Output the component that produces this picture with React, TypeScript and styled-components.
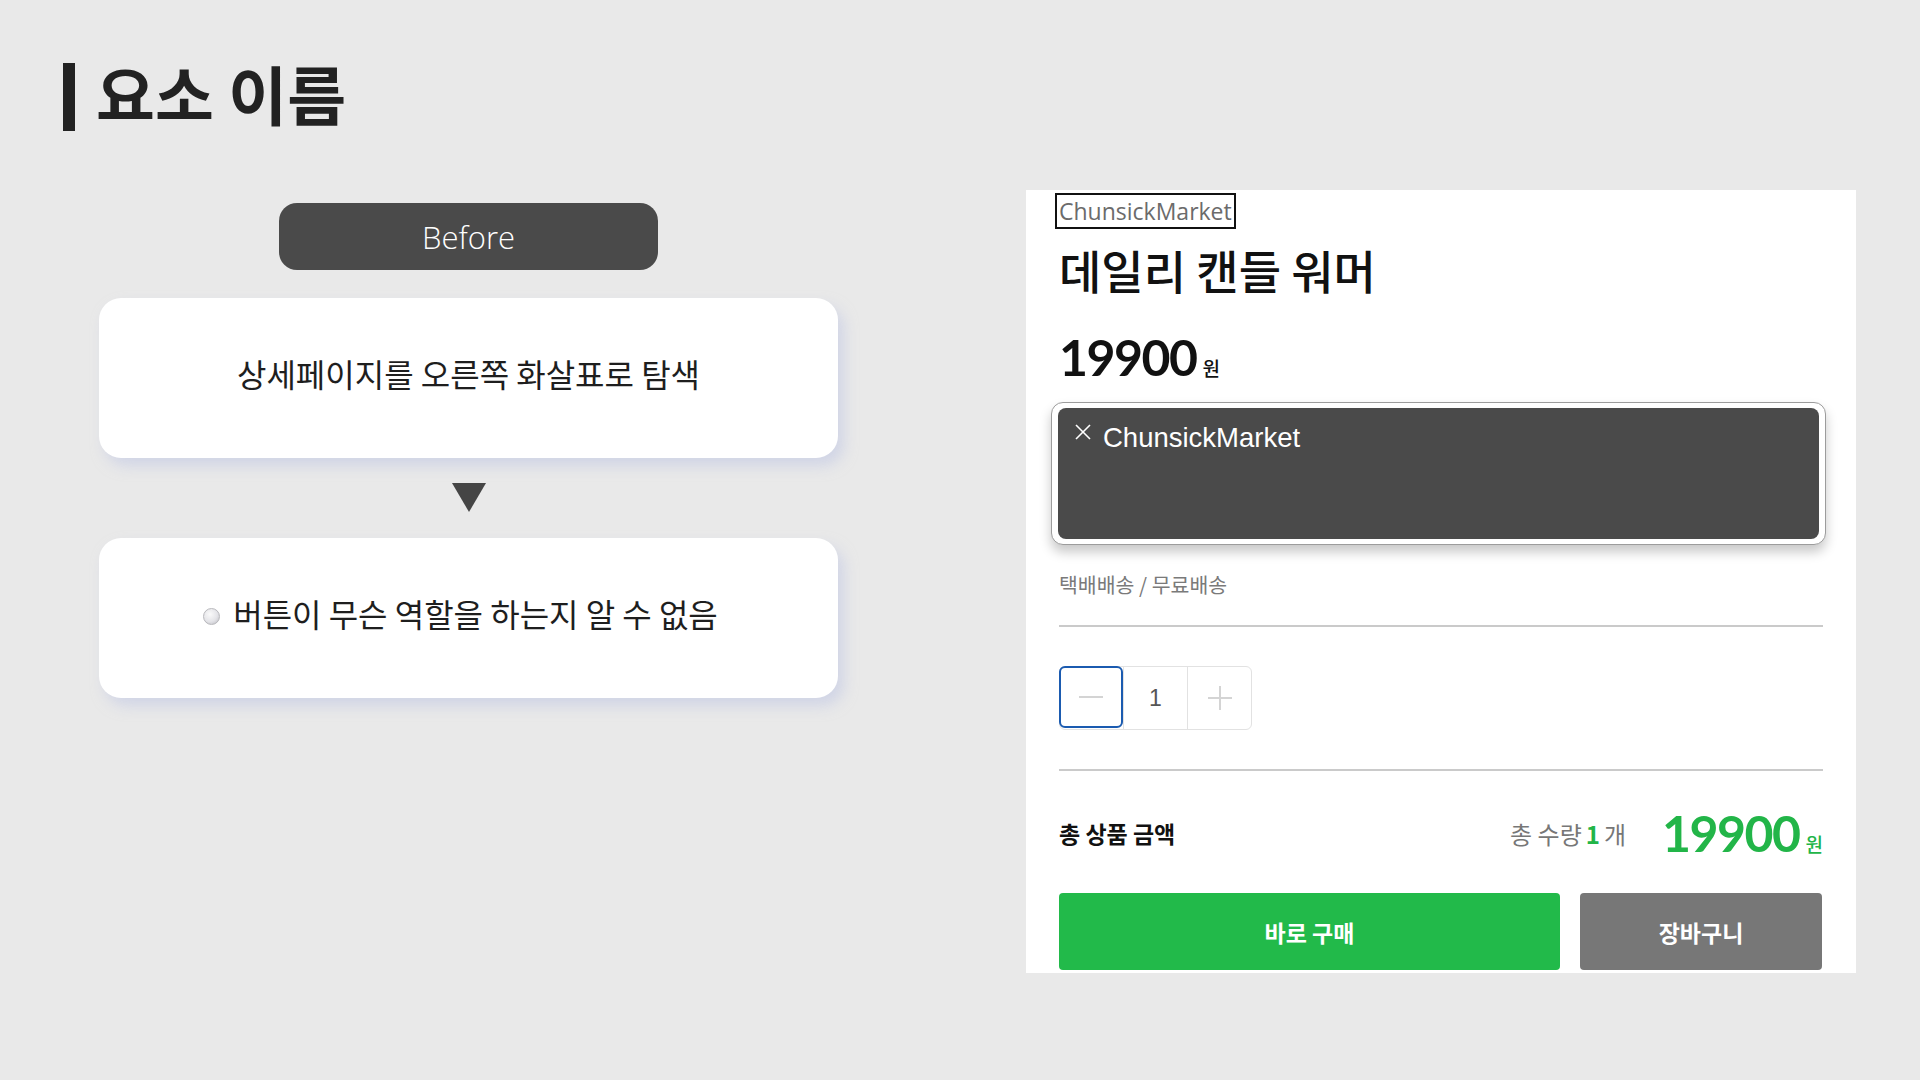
import React from 'react';
import styled, { createGlobalStyle } from 'styled-components';

const GlobalStyle = createGlobalStyle`
  html, body {
    margin: 0;
    padding: 0;
    background: #e9e9e9;
  }
  * {
    box-sizing: border-box;
  }
`;

const KR = `"Noto Sans CJK KR", "Noto Sans", sans-serif`;

const Page = styled.div`
  width: 1920px;
  height: 1080px;
  background: #e9e9e9;
  padding: 63px 64px 0 63px;
  font-family: ${KR};
  overflow: hidden;
`;

const Header = styled.div`
  display: flex;
  align-items: center;
  gap: 21px;
  height: 68px;
`;

const HeaderBar = styled.div`
  width: 12px;
  height: 68px;
  background: #222;
`;

const HeaderTitle = styled.h1`
  margin: -10px 0 0;
  font-size: 64px;
  font-weight: 700;
  line-height: 68px;
  color: #222;
`;

const Body = styled.div`
  display: flex;
  gap: 188px;
  margin-top: 59px;
  padding-left: 36px;
`;

const LeftColumn = styled.div`
  width: 739px;
  padding-top: 13px;
  display: flex;
  flex-direction: column;
  align-items: center;
`;

const StagePill = styled.div`
  width: 379px;
  height: 67px;
  border-radius: 18px;
  background: #4a4a4a;
  color: #fff;
  display: flex;
  align-items: center;
  justify-content: center;
  font-family: "Open Sans", sans-serif;
  font-weight: 300;
  font-size: 31px;
  margin-bottom: 28px;
`;

const Card = styled.div<{ $nudge?: number }>`
  width: 739px;
  height: 160px;
  border-radius: 22px;
  background: #fff;
  box-shadow: 6px 8px 14px rgba(190, 196, 228, 0.55);
  display: flex;
  align-items: center;
  justify-content: center;
  gap: 13px;
  padding-bottom: 10px;
  padding-right: ${p => p.$nudge ?? 0}px;
  font-size: 32px;
  color: #1e1e1e;
`;

const Bullet = styled.span`
  width: 17px;
  height: 17px;
  border-radius: 50%;
  border: 1px solid #b8b8bc;
  background: radial-gradient(circle at 40% 35%, #fafafa 0%, #e4e4e8 55%, #b9b9bf 100%);
  margin-top: 6px;
`;

const DownArrow = styled.div`
  width: 0;
  height: 0;
  border-left: 17px solid transparent;
  border-right: 17px solid transparent;
  border-top: 29px solid #454545;
  margin: 25px 0 26px;
`;

const ProductPanel = styled.div`
  width: 830px;
  height: 783px;
  background: #fff;
  padding: 3px 33px 0 33px;
  display: flex;
  flex-direction: column;
  overflow: hidden;
`;

const BrandTag = styled.div`
  align-self: flex-start;
  margin-left: -4px;
  border: 2px solid #111;
  padding: 0 2px;
  font-family: "Open Sans", sans-serif;
  font-size: 23px;
  line-height: 32px;
  color: #6b6b6b;
`;

const ProductName = styled.h2`
  margin: 12px 0 0;
  font-size: 46px;
  font-weight: 500;
  line-height: 56px;
  color: #111;
`;

const PriceLine = styled.div<{ $top: number; $color: string }>`
  display: flex;
  align-items: baseline;
  margin-top: ${p => p.$top}px;
  color: ${p => p.$color};
`;

const PriceNumber = styled.span`
  font-family: Lato, "Noto Sans", sans-serif;
  font-weight: 700;
  font-size: 50px;
  line-height: 60px;
  letter-spacing: -1.5px;
`;

const Won = styled.span`
  font-size: 19px;
  font-weight: 500;
  margin-left: 6px;
`;

const TooltipFrame = styled.div`
  margin: 15px -3px 0 -8px;
  height: 143px;
  background: #fff;
  border: 1px solid #9c9c9c;
  border-radius: 12px;
  padding: 5px 6px;
  box-shadow: 0 7px 12px rgba(0, 0, 0, 0.22);
`;

const TooltipBody = styled.div`
  height: 100%;
  background: #4a4a4a;
  border-radius: 8px;
  padding: 14px 16px;
  display: flex;
  align-items: flex-start;
  gap: 11px;
`;

const CloseMark = styled.svg`
  margin-top: 2px;
  flex: none;
`;

const TooltipText = styled.span`
  font-family: "Liberation Sans", Arial, sans-serif;
  font-size: 27.5px;
  line-height: 32px;
  color: #fff;
`;

const Shipping = styled.div`
  margin-top: 26px;
  font-size: 20.5px;
  line-height: 26px;
  color: #7a7a7a;
`;

const Divider = styled.div<{ $top: number }>`
  margin-top: ${p => p.$top}px;
  height: 2px;
  background: #cacaca;
`;

const Stepper = styled.div`
  margin-top: 39px;
  width: 193px;
  height: 64px;
  display: flex;
  border: 1px solid #e2e2e2;
  border-radius: 6px;
`;

const StepCell = styled.div<{ $active?: boolean }>`
  width: 64px;
  height: 100%;
  display: flex;
  align-items: center;
  justify-content: center;
  font-family: "Liberation Sans", Arial, sans-serif;
  font-size: 23px;
  color: #555;
  border: ${p => (p.$active ? '2.5px solid #1b5bb0' : 'none')};
  border-radius: ${p => (p.$active ? '6px' : '0')};
  margin: ${p => (p.$active ? '-1px 0 -1px -1px' : '0')};
  & + & {
    border-left: 1px solid #e2e2e2;
  }
`;

const TotalRow = styled.div`
  margin-top: 32px;
  height: 60px;
  display: flex;
  align-items: center;
  justify-content: space-between;
`;

const TotalLabel = styled.span`
  font-size: 23px;
  font-weight: 700;
  color: #111;
`;

const TotalRight = styled.div`
  display: flex;
  align-items: center;
  gap: 36px;
`;

const Quantity = styled.span`
  font-size: 24px;
  color: #777;
  b {
    color: #22b548;
    font-weight: 700;
    margin: 0 4px;
  }
`;

const ButtonRow = styled.div`
  margin-top: 30px;
  display: flex;
  gap: 20px;
`;

const ActionButton = styled.button<{ $primary?: boolean }>`
  height: 77px;
  width: ${p => (p.$primary ? '501px' : '242px')};
  border: none;
  border-radius: 4px;
  background: ${p => (p.$primary ? '#22ba4a' : '#777777')};
  color: #fff;
  font-family: ${KR};
  font-size: 23px;
  font-weight: 700;
`;

function LineIcon({ kind }: { kind: 'minus' | 'plus' }) {
  return (
    <svg width="26" height="26" viewBox="0 0 26 26">
      <line x1="1" y1="13" x2="25" y2="13" stroke="#d4d4d4" strokeWidth="2" />
      {kind === 'plus' && <line x1="13" y1="1" x2="13" y2="25" stroke="#d4d4d4" strokeWidth="2" />}
    </svg>
  );
}

export default function App() {
  return (
    <Page>
      <GlobalStyle />
      <Header>
        <HeaderBar />
        <HeaderTitle>요소 이름</HeaderTitle>
      </Header>
      <Body>
        <LeftColumn>
          <StagePill>Before</StagePill>
          <Card>상세페이지를 오른쪽 화살표로 탐색</Card>
          <DownArrow />
          <Card $nudge={16}>
            <Bullet />
            버튼이 무슨 역할을 하는지 알 수 없음
          </Card>
        </LeftColumn>
        <ProductPanel>
          <BrandTag>ChunsickMarket</BrandTag>
          <ProductName>데일리 캔들 워머</ProductName>
          <PriceLine $top={30} $color="#111">
            <PriceNumber>19900</PriceNumber>
            <Won>원</Won>
          </PriceLine>
          <TooltipFrame>
            <TooltipBody>
              <CloseMark width="18" height="16" viewBox="0 0 18 16">
                <line x1="2" y1="1" x2="16" y2="15" stroke="#fff" strokeWidth="1.6" />
                <line x1="16" y1="1" x2="2" y2="15" stroke="#fff" strokeWidth="1.6" />
              </CloseMark>
              <TooltipText>ChunsickMarket</TooltipText>
            </TooltipBody>
          </TooltipFrame>
          <Shipping>택배배송 / 무료배송</Shipping>
          <Divider $top={28} />
          <Stepper>
            <StepCell $active>
              <LineIcon kind="minus" />
            </StepCell>
            <StepCell>1</StepCell>
            <StepCell>
              <LineIcon kind="plus" />
            </StepCell>
          </Stepper>
          <Divider $top={39} />
          <TotalRow>
            <TotalLabel>총 상품 금액</TotalLabel>
            <TotalRight>
              <Quantity>
                총 수량<b>1</b>개
              </Quantity>
              <PriceLine $top={0} $color="#22b548">
                <PriceNumber>19900</PriceNumber>
                <Won>원</Won>
              </PriceLine>
            </TotalRight>
          </TotalRow>
          <ButtonRow>
            <ActionButton $primary>바로 구매</ActionButton>
            <ActionButton>장바구니</ActionButton>
          </ButtonRow>
        </ProductPanel>
      </Body>
    </Page>
  );
}
